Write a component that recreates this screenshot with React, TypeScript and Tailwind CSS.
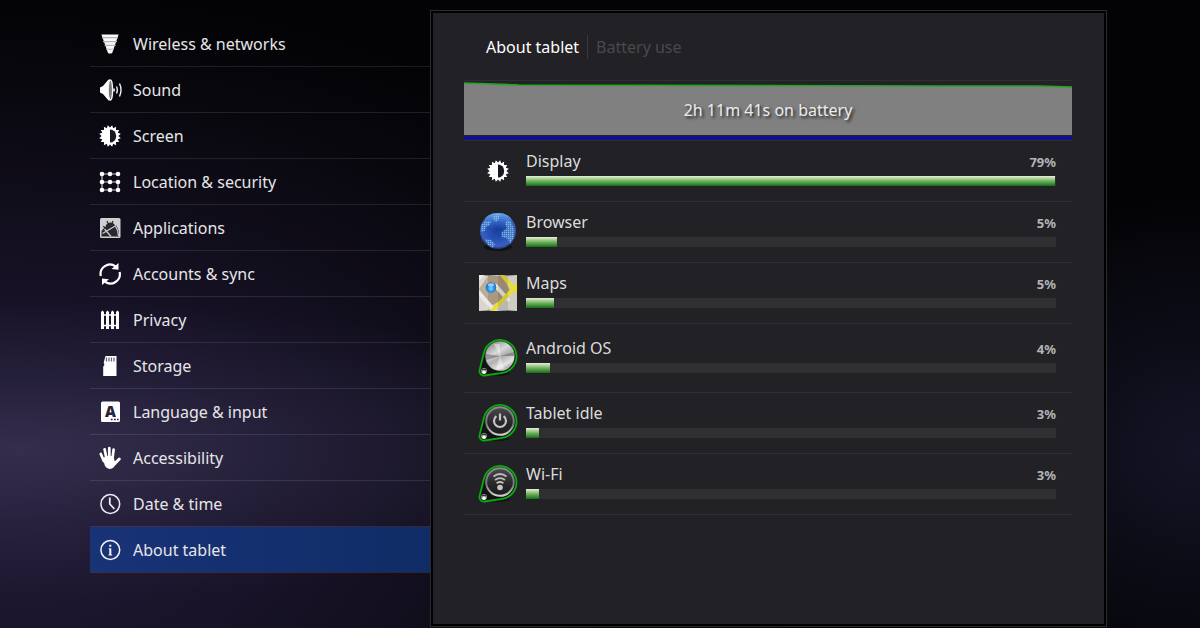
import type { ReactNode } from 'react';

interface NavItem {
  label: string;
  icon: ReactNode;
}

interface UsageItem {
  label: string;
  percent: number;
  fill: number;
  icon: ReactNode;
  tall?: boolean;
}

// Toothed disc outline shared by both brightness icons
const sunPoints = Array.from({ length: 32 }, (_, i) => {
  const r = i % 2 === 0 ? 11 : 8.4;
  const a = ((i + 1) * Math.PI) / 16;
  return `${(12 + r * Math.cos(a)).toFixed(2)},${(12 + r * Math.sin(a)).toFixed(2)}`;
}).join(' ');

function SunIcon() {
  return (
    <svg viewBox="0 0 24 24" className="size-6" fill="#fff">
      <polygon points={sunPoints} />
      <path d="M12 5.4a6.2 6.6 0 0 1 0 13.2z" fill="#1a1822" />
    </svg>
  );
}

function WirelessIcon() {
  return (
    <svg viewBox="0 0 24 24" className="size-6">
      <path d="M3.4 2.5h17.2L14.2 21q-2.2 1-4.2 0z" fill="#f8f8f8" />
      <path d="M4 5.600h16M5 9.600h14M6.600 13.400h11M8 17.200h8" stroke="#b4b4b8" strokeWidth="1.1" />
    </svg>
  );
}

function SoundIcon() {
  return (
    <svg viewBox="0 0 24 24" className="size-6" fill="none" stroke="#f2f2f2">
      <path d="M2 9.5l3-1.500 5.500-6.500 2 .3v20.400l-2 .3L5 16l-3-1.500z" fill="#fff" stroke="none" />
      <ellipse cx="12.400" cy="12" rx="2.200" ry="10.200" fill="#77777c" strokeWidth="1.300" />
      <path d="M16 10.500v3" strokeWidth="1.600" />
      <path d="M18.500 8.500q1.600 3.500 0 7M21.500 5.500q3 6.500 0 13" strokeWidth="1.400" />
    </svg>
  );
}

function PatternIcon() {
  return (
    <svg viewBox="0 0 24 24" className="size-6" fill="#fff">
      <path d="M4 20V4h16M4 12h16v8H4" fill="none" stroke="#c8c8cc" strokeWidth="1.2" />
      {[4, 12, 20].map(y =>
        [4, 12, 20].map(x => <circle key={`${x}-${y}`} cx={x} cy={y} r="2.3" />)
      )}
    </svg>
  );
}

function ApplicationsIcon() {
  return (
    <svg viewBox="0 0 24 24" className="size-6">
      <rect x="2" y="2" width="20.5" height="20" rx="1.5" fill="#d0d0d0" />
      <path d="M3.500 20.500V15l2.500-3-1.500-2.500 3 1.500Q8 7 12 6.500q4 0 5 3h1.500l2.500 6v5z" fill="#292730" />
      <path d="M4.500 17.500L18 9.500M6.500 13l6.500 7.500M17.500 10q3 5 3 10" stroke="#c9c9c9" strokeWidth="1.300" fill="none" />
      <path d="M10 7.500l-1-2.500M14 7.200L15 5" stroke="#292730" strokeWidth="1.200" />
    </svg>
  );
}

function SyncIcon() {
  return (
    <svg viewBox="0 0 24 24" className="size-6" fill="#fff">
      <path d="M2.800 14A9.400 9.400 0 0 1 17.500 4.400M21.600 10A9.400 9.400 0 0 1 6.800 19.600" fill="none" stroke="#fff" strokeWidth="2.2" />
      <path d="M20.500 1v6.800l-7-.8zM4 23v-6.600l7 .8z" />
    </svg>
  );
}

function FenceIcon() {
  return (
    <svg viewBox="0 0 24 24" className="size-6" fill="#fff">
      <path d="M3 4l1.500-1.500L6 4v17H3zM8 4l1.500-1.500L11 4v17H8zM13 4l1.500-1.500L16 4v17h-3zM18 4l1.500-1.500L21 4v17h-3z" />
      <path d="M3 7h18M3 17.5h18" stroke="#fff" strokeWidth="1.700" />
    </svg>
  );
}

function StorageIcon() {
  return (
    <svg viewBox="0 0 24 24" className="size-6">
      <path d="M7.500 2H18.500v20H5.200v-9.500l1-1V9.500l-.6-.6z" fill="#fff" />
      <path d="M8.500 3.500v4M11 3.500v4M13.500 3.500v4M16 3.500v4" stroke="#66636e" strokeWidth="1.200" />
    </svg>
  );
}

function LanguageIcon() {
  return (
    <svg viewBox="0 0 24 24" className="size-6">
      <rect x="3" y="1.5" width="19" height="20.5" rx="1.5" fill="#fff" />
      <text x="12.4" y="16.5" textAnchor="middle" fontFamily="Noto Sans, sans-serif" fontSize="15" fontWeight="900" fill="#29243a">A</text>
      <path d="M12.800 19.600h1.800M16 19.600h1.800M19 19.600h1.600" stroke="#29243a" strokeWidth="1.500" />
    </svg>
  );
}

function HandIcon() {
  return (
    <svg viewBox="0 0 24 24" className="size-6" fill="none" stroke="#fff" strokeLinecap="round">
      <path d="M2.800 8l3 7M6.600 3.300l1.800 9M11.300 2v10M15.600 3.600l-1.100 9" strokeWidth="2.700" />
      <path d="M21.300 13L16 18.500" strokeWidth="3" />
      <path d="M4.500 12l5-2h6.200l.8 5 2.500-.5q-2 6.500-5 8-4.500 1.500-7-2.500z" fill="#fff" stroke="none" />
    </svg>
  );
}

function ClockIcon() {
  return (
    <svg viewBox="0 0 24 24" className="size-6" fill="none" stroke="#ececf0">
      <circle cx="12.3" cy="12" r="9.4" strokeWidth="1.5" />
      <path d="M11.800 5.500V12l4.600 5" strokeWidth="1.800" />
    </svg>
  );
}

function InfoIcon() {
  return (
    <svg viewBox="0 0 24 24" className="size-6" fill="none" stroke="#f4f4f8">
      <circle cx="12.3" cy="12" r="9.4" strokeWidth="1.5" />
      <path d="M12.300 6.800v2M12.300 10.500v6.500" strokeWidth="2" />
      <path d="M10.800 10.800h1.500M10.600 17h3.600" strokeWidth="1" />
    </svg>
  );
}

function GlobeIcon() {
  return (
    <svg viewBox="0 0 40 40" className="size-10">
      <defs>
        <radialGradient id="globe" cx="50%" cy="45%" r="56%">
          <stop offset="0" stopColor="#1a3c96" />
          <stop offset="0.5" stopColor="#2450b4" />
          <stop offset="0.85" stopColor="#3a60be" />
          <stop offset="1" stopColor="#172b70" />
        </radialGradient>
        <linearGradient id="globeShine" x1="0" y1="0" x2="0" y2="1">
          <stop offset="0" stopColor="#6fb4f5" stopOpacity="0.9" />
          <stop offset="1" stopColor="#3b6fd0" stopOpacity="0" />
        </linearGradient>
        <pattern id="globeDots" width="2" height="2" patternUnits="userSpaceOnUse">
          <rect width="2" height="2" fill="#5b9bd6" opacity="0.4" />
          <rect width="1.3" height="1.3" fill="#8cc6ea" />
        </pattern>
      </defs>
      <ellipse cx="20" cy="35" rx="14" ry="4" fill="#111116" />
      <circle cx="20" cy="19" r="18" fill="url(#globe)" />
      <ellipse cx="20" cy="9" rx="13.5" ry="8" fill="url(#globeShine)" />
      <g fill="url(#globeDots)" opacity="0.85">
        <path d="M3 13l4-4 6 0-1 4-4 2-1 4-4 1z" />
        <path d="M15 3l6-1v5l-3 3-3-3z" />
        <path d="M29 8l4 2 3 7v8l-4 7-2-5-6-2-1-4 6-5-2-4z" />
        <path d="M7 27l6 1 4 4-2 4-5-3z" />
      </g>
    </svg>
  );
}

function MapIcon() {
  return (
    <svg viewBox="0 0 40 40" className="size-10">
      <defs>
        <clipPath id="mapSheet">
          <path d="M1 2l9 .6 10-.6 10 .6 9-.6v36l-9-.6-10 .6-10-.6-9 .6z" />
        </clipPath>
        <radialGradient id="mapPin" cx="50%" cy="60%" r="60%">
          <stop offset="0" stopColor="#8fdcff" />
          <stop offset="0.5" stopColor="#2591ee" />
          <stop offset="1" stopColor="#1263bf" />
        </radialGradient>
      </defs>
      <g clipPath="url(#mapSheet)">
        <rect width="40" height="40" fill="#cfccc4" />
        <path d="M1 16l9-13h14l8 14-10 11-9 5z" fill="#ab997e" />
        <path d="M0 19l18 20M17 12l14 16M6 0L0 6" stroke="#e9e7e2" strokeWidth="4" />
        <path d="M22 0l18 20M40 11L12 40" stroke="#ebdf27" strokeWidth="3.5" fill="none" />
        <path d="M20 0h10v40H20z" fill="#000" opacity="0.1" />
        <path d="M1 0h9v40H1z" fill="#fff" opacity="0.2" />
      </g>
      <circle cx="13" cy="14.5" r="5.3" fill="url(#mapPin)" />
      <ellipse cx="13" cy="11.8" rx="3.2" ry="1.8" fill="#fff" opacity="0.55" />
    </svg>
  );
}

function BadgeIcon({ children }: { children?: ReactNode }) {
  return (
    <svg viewBox="0 0 40 40" className="size-10">
      <defs>
        <linearGradient id="badgeRing" x1="0" y1="0" x2="0" y2="1">
          <stop offset="0" stopColor="#8a8a8c" />
          <stop offset="0.6" stopColor="#77777a" />
          <stop offset="1" stopColor="#cfcfd0" />
        </linearGradient>
        <linearGradient id="badgeFace" x1="0" y1="0" x2="0" y2="1">
          <stop offset="0" stopColor="#4a4a4c" />
          <stop offset="0.6" stopColor="#262628" />
          <stop offset="1" stopColor="#1c1c1e" />
        </linearGradient>
      </defs>
      <ellipse cx="19" cy="35" rx="13" ry="3" fill="#131316" />
      <path
        d="M1.6 31.900L6 14.500A16.500 16.500 0 1 1 24.400 34.800L6.700 37.500A4.500 4.500 0 0 1 1.600 31.900z"
        fill="#131315"
        stroke="#08ac0d"
        strokeWidth="1.8"
      />
      <circle cx="22" cy="18" r="13.8" fill="url(#badgeFace)" stroke="url(#badgeRing)" strokeWidth="2" />
      {children}
      <circle cx="6" cy="33" r="3" fill="#8d8d8d" />
      <path d="M3.8 31.500h4.400" stroke="#333" strokeWidth="1" />
      <circle cx="6" cy="34.2" r="1.7" fill="#fff" />
    </svg>
  );
}

// Brushed metal disc
function MetalDisc() {
  return (
    <g>
      <defs>
        <linearGradient id="metal" x1="0.2" y1="0" x2="0.8" y2="1">
          <stop offset="0" stopColor="#8a8a8a" />
          <stop offset="0.35" stopColor="#d8d8d8" />
          <stop offset="0.55" stopColor="#b0b0b0" />
          <stop offset="0.8" stopColor="#e4e4e4" />
          <stop offset="1" stopColor="#8a8a8a" />
        </linearGradient>
      </defs>
      <circle cx="22" cy="18" r="14.2" fill="url(#metal)" />
      <path d="M22 18L8 16v6zM22 18l14-4v4z" fill="#555" opacity="0.5" />
      <path d="M22 18L16 6h6zM22 18l-4 13h8z" fill="#fff" opacity="0.4" />
    </g>
  );
}

function PowerGlyph() {
  return (
    <path d="M18.400 13.200a6 6 0 1 0 7.200 0M22 10.500v7" fill="none" stroke="#c4c4c4" strokeWidth="2.200" />
  );
}

function WifiGlyph() {
  return (
    <g fill="none" stroke="#bdbdbd" strokeWidth="1.8">
      <path d="M15.500 12.500q6.500-5 13 0M17 16q5-3.600 10 0M18.600 19.200q3.400-2.400 6.800 0" />
      <circle cx="22" cy="23.5" r="2.8" fill="#c4c4c4" stroke="none" />
    </g>
  );
}

const navItems: NavItem[] = [
  { label: 'Wireless & networks', icon: <WirelessIcon /> },
  { label: 'Sound', icon: <SoundIcon /> },
  { label: 'Screen', icon: <SunIcon /> },
  { label: 'Location & security', icon: <PatternIcon /> },
  { label: 'Applications', icon: <ApplicationsIcon /> },
  { label: 'Accounts & sync', icon: <SyncIcon /> },
  { label: 'Privacy', icon: <FenceIcon /> },
  { label: 'Storage', icon: <StorageIcon /> },
  { label: 'Language & input', icon: <LanguageIcon /> },
  { label: 'Accessibility', icon: <HandIcon /> },
  { label: 'Date & time', icon: <ClockIcon /> },
  { label: 'About tablet', icon: <InfoIcon /> },
];

// fill is relative to the largest consumer, not to 100%
const usage: UsageItem[] = [
  { label: 'Display', percent: 79, fill: 99.8, icon: <SunIcon /> },
  { label: 'Browser', percent: 5, fill: 5.9, icon: <GlobeIcon /> },
  { label: 'Maps', percent: 5, fill: 5.3, icon: <MapIcon /> },
  { label: 'Android OS', percent: 4, fill: 4.6, icon: <BadgeIcon><MetalDisc /></BadgeIcon>, tall: true },
  { label: 'Tablet idle', percent: 3, fill: 2.5, icon: <BadgeIcon><PowerGlyph /></BadgeIcon> },
  { label: 'Wi-Fi', percent: 3, fill: 2.5, icon: <BadgeIcon><WifiGlyph /></BadgeIcon> },
];

function Sidebar() {
  return (
    <nav className="w-[340px] shrink-0 pt-[11px]">
      <ul>
        {navItems.map(item => {
          const active = item.label === 'About tablet';
          return (
            <li key={item.label} className="border-b border-white/10">
              <a
                href="#"
                aria-current={active ? 'page' : undefined}
                className={`flex h-[45px] items-center gap-[11px] pl-2 ${active ? 'bg-linear-to-r from-[#193377] to-[#0f2c66]' : ''}`}
              >
                {item.icon}
                {item.label}
              </a>
            </li>
          );
        })}
      </ul>
    </nav>
  );
}

function BatteryGraph() {
  return (
    <div className="border-y border-[#2e2e32]">
      <div className="relative h-[54px]">
        <svg viewBox="0 0 608 54" preserveAspectRatio="none" className="absolute inset-0 size-full">
          <path d="M0 2L55 4L480 5L575 5L608 6V54H0z" fill="#808080" />
          <path d="M0 2L55 4L480 5L575 5L608 6" fill="none" stroke="#23a523" strokeWidth="1.600" />
        </svg>
        <p className="relative pt-[17px] text-center leading-6 text-[#ececec] [text-shadow:2px_2px_3px_#222]">
          2h 11m 41s on battery
        </p>
      </div>
      <div className="mt-[2px] mb-[1px] h-[2px] bg-[#0000f4]" />
    </div>
  );
}

function UsageRow({ item }: { item: UsageItem }) {
  return (
    <li className={`flex items-center border-b border-[#303034] pr-4 pl-[14px] ${item.tall ? 'h-[69px]' : 'h-[61px]'}`}>
      <div className="flex w-10 shrink-0 justify-center">{item.icon}</div>
      <div className="ml-2 flex-1 pb-1.5">
        <div className="flex h-[26px] items-start justify-between leading-[22px]">
          <span className="text-[#dcdcdc]">{item.label}</span>
          <span className="pt-px text-[13px] font-bold text-[#b4b4b6]">{item.percent}%</span>
        </div>
        <div
          role="progressbar"
          aria-label={item.label}
          aria-valuenow={item.percent}
          className="h-[10px] bg-[#303032]"
        >
          <div
            className="h-full bg-linear-to-b from-[#e8f0d4] via-[#6fb25f] to-[#0b6e12]"
            style={{ width: `${item.fill}%` }}
          />
        </div>
      </div>
    </li>
  );
}

export default function App() {
  return (
    <div className="flex min-h-screen bg-[#030305] bg-[radial-gradient(ellipse_640px_150px_at_20px_450px,rgb(62_56_88/0.7)_0%,rgb(54_48_80/0.35)_50%,rgb(50_42_76/0)_100%),radial-gradient(ellipse_820px_520px_at_0px_500px,#201a36_0%,#181328_35%,#100d1a_60%,#08070d_80%,rgb(3_3_5/0)_100%),radial-gradient(ellipse_300px_260px_at_1200px_450px,#141426_0%,rgb(3_3_5/0)_100%)] pt-[10px] pr-[93px] pb-[1px] pl-[90px] font-['Noto_Sans',sans-serif] text-base text-[#e6e6e8]">
      <Sidebar />
      <main className="flex-1 border border-[#2b2b2e] bg-black p-[2px]">
        <div className="h-full bg-[#222126] pt-[22px] pr-8 pl-[31px]">
          <header className="flex h-[45px] items-start pl-[22px] leading-6">
            <h1 className="mr-2 text-white">About tablet</h1>
            <span className="border-l border-[#38383c] pl-2 text-[#49494c]">Battery use</span>
          </header>
          <BatteryGraph />
          <ul>
            {usage.map(item => (
              <UsageRow key={item.label} item={item} />
            ))}
          </ul>
        </div>
      </main>
    </div>
  );
}
